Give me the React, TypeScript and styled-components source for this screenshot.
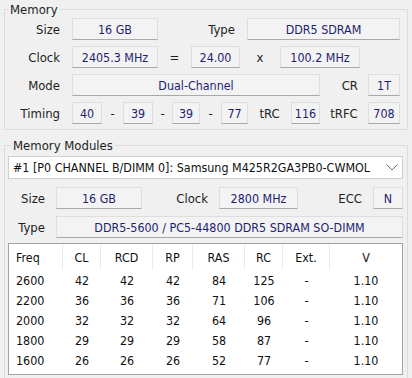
import React from "react";
import styled, { createGlobalStyle } from "styled-components";

const Global = createGlobalStyle`
  html, body {
    margin: 0;
    background: #f0f0f0;
  }
  body {
    font-family: "DejaVu Sans Condensed", Tahoma, "DejaVu Sans", sans-serif;
    font-size: 12.4px;
    color: #1e1e1e;
  }
`;

const Panel = styled.div`
  width: 412px;
  height: 378px;
  overflow: hidden;
  padding-top: 2px;
  box-sizing: border-box;
`;

const Group = styled.fieldset<{ $top?: number; $pad: string }>`
  margin: ${(p) => p.$top ?? 0}px 4px 0 4px;
  border: 1px solid #dcdcdc;
  padding: ${(p) => p.$pad};
  min-width: 0;
`;

const Legend = styled.legend`
  padding: 0 2px;
  margin-left: 3px;
  line-height: 15px;
  font-size: 13px;
  color: #1e1e1e;
`;

const Rows = styled.div<{ $gap: number; $top?: number }>`
  display: flex;
  flex-direction: column;
  gap: ${(p) => p.$gap}px;
  margin-top: ${(p) => p.$top ?? 0}px;
`;

const Row = styled.div`
  display: flex;
  align-items: center;
  height: 22px;
`;

const Label = styled.span<{ $w: number; $gap?: number; $align?: string }>`
  flex: none;
  width: ${(p) => p.$w}px;
  margin-right: ${(p) => p.$gap ?? 0}px;
  text-align: ${(p) => p.$align ?? "right"};
  font-size: 13px;
  color: #1e1e1e;
`;

const Field = styled.div<{ $w?: number }>`
  flex: ${(p) => (p.$w ? "none" : "1")};
  width: ${(p) => (p.$w ? `${p.$w}px` : "auto")};
  height: 22px;
  box-sizing: border-box;
  display: flex;
  align-items: center;
  justify-content: center;
  background: #f3f3f3;
  border: 1px solid #dedede;
  border-bottom-color: #a9a9a9;
  color: #1f1f72;
  white-space: nowrap;
`;

const Select = styled.div`
  height: 23px;
  box-sizing: border-box;
  background: #fff;
  border: 1px solid #cfcfcf;
  display: flex;
  align-items: center;
  justify-content: space-between;
  padding: 0 4px 0 4px;
  color: #111;
  white-space: nowrap;
`;

const Table = styled.div`
  margin-top: 5px;
  background: #fff;
  border: 1px solid #a3a3a3;
  display: grid;
  grid-template-columns: 54px 38px 52px 40px 52px 38px 47px 72px;
  grid-template-rows: 26px;
  grid-auto-rows: 20px;
  padding-bottom: 4px;
  color: #111;
`;

const Head = styled.div<{ $left?: boolean; $last?: boolean }>`
  display: flex;
  align-items: center;
  justify-content: ${(p) => (p.$left ? "flex-start" : "center")};
  padding-left: ${(p) => (p.$left ? 7 : 0)}px;
  border-right: ${(p) => (p.$last ? "none" : "1px solid #ebebeb")};
  box-sizing: border-box;
`;

const Cell = styled.div<{ $left?: boolean }>`
  display: flex;
  align-items: center;
  justify-content: ${(p) => (p.$left ? "flex-start" : "center")};
  padding-left: ${(p) => (p.$left ? 7 : 0)}px;
`;

const Chevron = () => (
  <svg width="12" height="7" viewBox="0 0 12 7">
    <polyline points="0.5,0.5 6,6 11.5,0.5" fill="none" stroke="#707070" strokeWidth="1" />
  </svg>
);

const heads = ["Freq", "CL", "RCD", "RP", "RAS", "RC", "Ext.", "V"];
const rows = [
  ["2600", "42", "42", "42", "84", "125", "-", "1.10"],
  ["2200", "36", "36", "36", "71", "106", "-", "1.10"],
  ["2000", "32", "32", "32", "64", "96", "-", "1.10"],
  ["1800", "29", "29", "29", "58", "87", "-", "1.10"],
  ["1600", "26", "26", "26", "52", "77", "-", "1.10"],
];

export default function App() {
  return (
    <Panel>
      <Global />
      <Group $pad="1px 7px 5px 0">
        <Legend>Memory</Legend>
        <Rows $gap={6}>
          <Row>
            <Label $w={55} $gap={12}>Size</Label>
            <Field $w={86}>16 GB</Field>
            <Label $w={77} $gap={12}>Type</Label>
            <Field $w={153}>DDR5 SDRAM</Field>
          </Row>
          <Row>
            <Label $w={55} $gap={12}>Clock</Label>
            <Field $w={86}>2405.3 MHz</Field>
            <Label $w={33} $align="center">=</Label>
            <Field $w={49}>24.00</Field>
            <Label $w={40} $align="center">x</Label>
            <Field $w={80}>100.2 MHz</Field>
          </Row>
          <Row>
            <Label $w={55} $gap={12}>Mode</Label>
            <Field $w={248}>Dual-Channel</Field>
            <Label $w={38} $gap={10}>CR</Label>
            <Field $w={32}>1T</Field>
          </Row>
          <Row>
            <Label $w={55} $gap={12}>Timing</Label>
            <Field $w={30}>40</Field>
            <Label $w={21} $align="center">-</Label>
            <Field $w={30}>39</Field>
            <Label $w={19} $align="center">-</Label>
            <Field $w={28}>39</Field>
            <Label $w={21} $align="center">-</Label>
            <Field $w={27}>77</Field>
            <Label $w={43} $align="center">tRC</Label>
            <Field $w={29}>116</Field>
            <Label $w={48} $align="center">tRFC</Label>
            <Field $w={32}>708</Field>
          </Row>
        </Rows>
      </Group>

      <Group $top={8} $pad="3px 4px 4px 3px">
        <Legend>Memory Modules</Legend>
        <Select>
          <span>#1 [P0 CHANNEL B/DIMM 0]: Samsung M425R2GA3PB0-CWMOL</span>
          <Chevron />
        </Select>
        <Rows $gap={7} $top={8}>
          <Row>
            <Label $w={37} $gap={11}>Size</Label>
            <Field $w={86}>16 GB</Field>
            <Label $w={66} $gap={11}>Clock</Label>
            <Field $w={79}>2800 MHz</Field>
            <Label $w={64} $gap={11}>ECC</Label>
            <Field $w={30}>N</Field>
          </Row>
          <Row>
            <Label $w={37} $gap={11}>Type</Label>
            <Field>DDR5-5600 / PC5-44800 DDR5 SDRAM SO-DIMM</Field>
          </Row>
        </Rows>
        <Table>
          {heads.map((h, i) => (
            <Head key={h} $left={i === 0} $last={i === heads.length - 1}>
              {h}
            </Head>
          ))}
          {rows.map((r) =>
            r.map((v, i) => (
              <Cell key={r[0] + i} $left={i === 0}>
                {v}
              </Cell>
            ))
          )}
        </Table>
      </Group>
    </Panel>
  );
}
